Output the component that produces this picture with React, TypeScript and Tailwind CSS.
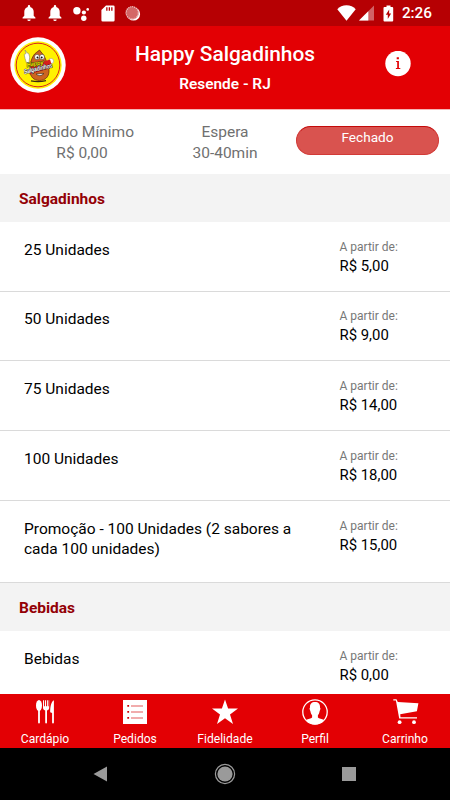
import type { ReactNode } from "react";

const sections = [
  {
    title: "Salgadinhos",
    items: [
      { name: "25 Unidades", price: "R$ 5,00" },
      { name: "50 Unidades", price: "R$ 9,00" },
      { name: "75 Unidades", price: "R$ 14,00" },
      { name: "100 Unidades", price: "R$ 18,00" },
      { name: "Promoção - 100 Unidades (2 sabores a cada 100 unidades)", price: "R$ 15,00" },
    ],
  },
  {
    title: "Bebidas",
    items: [{ name: "Bebidas", price: "R$ 0,00" }],
  },
];

function BellIcon() {
  return (
    <svg width="14" height="17" viewBox="0 0 14 17" fill="#fff">
      <path d="M7 0a1.2 1.2 0 0 0-1.2 1.2v.7C3.5 2.5 2.3 4.4 2.3 6.8v4L.6 12.6v1h12.8v-1l-1.7-1.8v-4c0-2.4-1.2-4.3-3.5-4.9v-.7A1.2 1.2 0 0 0 7 0zM5.3 14.4a1.7 1.7 0 0 0 3.4 0z" />
    </svg>
  );
}

function StatusBar() {
  return (
    <div className="flex h-[26px] shrink-0 items-center bg-[#b60003] pl-[21.5px] pr-[18px]">
      <BellIcon />
      <span className="w-[12.5px]" />
      <BellIcon />
      <svg className="ml-[11px]" width="17" height="17" viewBox="0 0 17 17" fill="#fff">
        <circle cx="3.9" cy="5.8" r="3.7" />
        <circle cx="10.9" cy="7.5" r="2.1" />
        <circle cx="14.7" cy="4.4" r="1.3" />
        <circle cx="10.8" cy="13.2" r="2.7" />
      </svg>
      <svg className="ml-[10.5px]" width="14" height="17" viewBox="0 0 14 17">
        <path
          fill="#fff"
          fillRule="evenodd"
          d="M5 .5h7.3a1.3 1.3 0 0 1 1.3 1.3v13.4a1.3 1.3 0 0 1-1.3 1.3H1.7A1.3 1.3 0 0 1 .4 15.2V5zM5.2 2.2v3.5h1.3V2.2zm2.5 0v3.5H9V2.2zm2.5 0v3.5h1.3V2.2z"
        />
      </svg>
      <svg className="ml-[10.5px]" width="16" height="17" viewBox="0 0 16 17">
        <circle cx="8.5" cy="9" r="6.6" fill="#fff" />
        <circle cx="7.2" cy="7.8" r="6.6" fill="#d46767" />
        <circle cx="7.2" cy="7.8" r="6.1" fill="none" stroke="#f0caca" strokeWidth="1.2" strokeDasharray="1 1" />
      </svg>
      <svg className="ml-auto" width="19" height="16" viewBox="0 0 19 16" fill="#fff">
        <path d="M9.5 15.8.3 4.2C2.5 1.8 5.8.3 9.5.3s7 1.5 9.2 3.9z" />
      </svg>
      <svg className="ml-[3px]" width="15" height="16" viewBox="0 0 15 16">
        <path fill="#d16266" d="M15 .5V15.5H0z" />
        <path fill="#fff" d="M9.3 6.2v9.3H0z" />
      </svg>
      <svg className="ml-[9px]" width="11" height="17" viewBox="0 0 11 17">
        <path fill="#fff" d="M3.5.5h4V2h1.7a1 1 0 0 1 1 1v12.5a1 1 0 0 1-1 1H1.5a1 1 0 0 1-1-1V3a1 1 0 0 1 1-1h2z" />
        <path fill="#b60003" d="M6.2 4.5 2.8 9.8h2V14l3.300-5.400h-2z" />
      </svg>
      <span className="mt-[2px] ml-[7.5px] text-[15.3px] leading-none font-medium text-white">2:26</span>
    </div>
  );
}

function Logo() {
  return (
    <svg className="shrink-0" width="56" height="56" viewBox="0 0 56 56">
      <circle cx="28" cy="28" r="27.7" fill="#fff" />
      <circle cx="28" cy="28" r="23.7" fill="#fff200" />
      <circle cx="28" cy="28" r="21.8" fill="none" stroke="#d9261c" strokeWidth="1" />
      <path d="M21 43.8q7 1.6 15-.1" fill="none" stroke="#3a2a10" strokeWidth="1.2" />
      <path
        d="M29.5 13c2 3 4.5 4.5 6 9 1.5 4 3.5 7 3.5 12 0 6-4 9.5-9.5 9.5S20 40 20 33.5C19.8 27 21 23 23.5 18.5c1.5-2.500 4-3.500 6-5.500z"
        fill="#cd6420"
        stroke="#6b300f"
        strokeWidth=".8"
      />
      <path d="m16.500 26-1.500-4.500-.8-4 1.800-1-1-3.500 2.200 3 1.500.5 1 3.500-.7 5.500z" fill="#fff" stroke="#8b8b62" strokeWidth=".6" />
      <circle cx="41" cy="24" r="2.6" fill="#fff" stroke="#999" strokeWidth=".5" />
      <ellipse cx="27" cy="20" rx="2.5" ry="2.7" fill="#fff" stroke="#321" strokeWidth=".5" />
      <ellipse cx="32" cy="20" rx="2.5" ry="2.7" fill="#fff" stroke="#321" strokeWidth=".5" />
      <circle cx="27.5" cy="20.5" r="1" fill="#111" />
      <circle cx="31.7" cy="20.5" r="1" fill="#111" />
      <path d="m20 29 20-6.500 2.500 8-23 7z" fill="#d81e1b" />
      <path d="M26 37q4 3.500 8-.5z" fill="#fff" stroke="#321" strokeWidth=".6" />
      <g fontFamily="Liberation Sans, sans-serif" fontWeight="700" fontStyle="italic">
        <text
          x="17"
          y="30"
          fontSize="6"
          fill="#ffe600"
          stroke="#26330a"
          strokeWidth=".8"
          paintOrder="stroke"
          textLength="17"
          transform="rotate(-10 17 30)"
        >
          Happy
        </text>
        <text
          x="14.5"
          y="37"
          fontSize="6.5"
          fill="#fff"
          stroke="#222"
          strokeWidth=".8"
          paintOrder="stroke"
          textLength="29"
          lengthAdjust="spacingAndGlyphs"
          transform="rotate(-13 14 37)"
        >
          Salgadinhos
        </text>
      </g>
    </svg>
  );
}

function Header() {
  return (
    <header className="flex h-[83px] shrink-0 bg-[#e30004] pt-[11px] pl-[10px] text-white">
      <Logo />
      <div className="flex w-[318px] flex-col items-center pt-[3px]">
        <h1 className="text-[20.9px] leading-7 font-medium whitespace-nowrap">Happy Salgadinhos</h1>
        <p className="mt-[6px] text-[15.4px] leading-5 font-semibold whitespace-nowrap">Resende - RJ</p>
      </div>
      <svg className="mt-[14px]" width="27" height="26" viewBox="0 0 27 26">
        <circle cx="14" cy="12.5" r="12.7" fill="#fff" />
        <path fill="#e30004" d="M12.1 10h2.8v7h1.4v1h-4.400v-1h1.300v-6h-1.100zM12.700 6.300h2.200v2h-2.200z" />
      </svg>
    </header>
  );
}

function StoreInfo() {
  return (
    <div className="flex h-[65px] shrink-0 border-t border-[#f5b5b6] text-[15.5px] leading-[21px] text-[#707070]">
      <div className="w-[164px] pt-[12px] text-center">
        <p>Pedido Mínimo</p>
        <p>R$ 0,00</p>
      </div>
      <div className="w-[122px] pt-[12px] text-center">
        <p>Espera</p>
        <p>30-40min</p>
      </div>
      <div className="mt-[16px] ml-[10px] h-[29px] w-[143px] rounded-full border border-[#d23a37] border-t-[#c40a0a] bg-[#d9534f] text-center text-[13.6px] leading-[21px] text-white">
        Fechado
      </div>
    </div>
  );
}

function NavItem({ label, children }: { label: string; children: ReactNode }) {
  return (
    <div className="flex w-[90px] flex-col items-center pt-[4px]">
      <svg width="28" height="28" viewBox="0 0 28 28" fill="#fff">
        {children}
      </svg>
      <span className="mt-[4.5px] text-[12.1px] leading-4 text-white">{label}</span>
    </div>
  );
}

function BottomNav() {
  return (
    <nav className="flex h-[54px] shrink-0 bg-[#e30004]">
      <NavItem label="Cardápio">
        <ellipse cx="8" cy="7.5" rx="3" ry="5.5" />
        <path d="M7.1 11h1.8v13.500a.9.900 0 0 1-1.800 0zM12 2.200h1v6h.9v-6h1.100v6h.9v-6h1v6h.7v-6h.600V9.500c0 1.800-.6 2.600-2.200 3v12a.9.900 0 0 1-1.800 0v-12c-1.500-.4-2.200-1.200-2.200-3zM22.900 2.200v22.300a.9.900 0 0 1-1.800 0V15l-1.900-.7c0-5 .7-10.500 3.700-12.100z" />
      </NavItem>
      <NavItem label="Pedidos">
        <path d="M2 2h24v24H2z" />
        <path d="M6.3 7h1.8v1.8H6.3zm0 6h1.8v1.8H6.3zm0 6h1.8v1.8H6.3z" fill="#cf0004" />
        <path d="M10 8h12M10 14h12M10 20h12" stroke="#e35a5a" strokeWidth="1.2" />
      </NavItem>
      <NavItem label="Fidelidade">
        <path d="m14 1.500 3.100 9.100h9.900l-8 6 3 9.400-8-5.800-8 5.800 3-9.400-8-6h9.900z" />
      </NavItem>
      <NavItem label="Perfil">
        <circle cx="14" cy="14" r="12.2" fill="none" stroke="#fff" strokeWidth="1.3" />
        <path d="M14 4c-3.400 0-5.300 2-5 5.500l-.5 1.300.9 2.500c.3 2 1 3.200 1.700 4v2.200c-1 1.300-4 1.500-6.100 2.500C7 24.500 10.200 26.500 14 26.500s7-2 9-4.500c-2.100-1-5.100-1.200-6.100-2.500v-2.200c.7-.8 1.400-2 1.700-4l.9-2.500-.5-1.300C19.300 6 17.400 4 14 4z" />
      </NavItem>
      <NavItem label="Carrinho">
        <path d="M2.300 1.200h3.200l1.300 2.700 20.600 1.300-1.500 8.100L9.200 16.300l.3 2.900H26v1.200H8.200L4.900 2.500H2.300z" />
        <circle cx="8.6" cy="24.2" r="1.9" />
        <circle cx="23" cy="24.2" r="1.9" />
      </NavItem>
    </nav>
  );
}

function SystemNav() {
  return (
    <div className="flex h-[52px] shrink-0 items-center bg-black pl-[93px]">
      <svg width="14" height="16" viewBox="0 0 14 16">
        <path d="M14 .5v15L.5 8z" fill="#9a9a9a" />
      </svg>
      <svg className="ml-[107px]" width="22" height="22" viewBox="0 0 22 22">
        <circle cx="11" cy="11" r="7.6" fill="#9a9a9a" />
        <circle cx="11" cy="11" r="9.6" fill="none" stroke="#9a9a9a" strokeWidth="1.2" />
      </svg>
      <span className="ml-[106px] size-[14px] bg-[#9a9a9a]" />
    </div>
  );
}

export default function App() {
  return (
    <div className="flex h-[800px] w-[450px] flex-col overflow-hidden bg-white font-['Roboto',sans-serif]">
      <StatusBar />
      <Header />
      <StoreInfo />
      <main className="h-[520px] shrink-0 overflow-hidden">
        {sections.map((section) => (
          <section key={section.title}>
            <h2 className="h-[48px] bg-[#f3f3f3] pl-[19px] text-[15.5px] leading-[50px] font-bold text-[#930005]">
              {section.title}
            </h2>
            {section.items.map((item) => (
              <div
                key={item.name}
                className="flex min-h-[69.7px] border-b border-[#dadada] pt-[15.8px] pl-[24px] text-black"
              >
                <p className="w-[315.5px] pt-[2px] pr-[40px] pb-[22.4px] text-[15.5px] leading-[20.5px]">
                  {item.name}
                </p>
                <div>
                  <p className="text-[12px] leading-[19px] text-[#777]">A partir de:</p>
                  <p className="text-[14.9px] leading-[18px]">{item.price}</p>
                </div>
              </div>
            ))}
          </section>
        ))}
      </main>
      <BottomNav />
      <SystemNav />
    </div>
  );
}
